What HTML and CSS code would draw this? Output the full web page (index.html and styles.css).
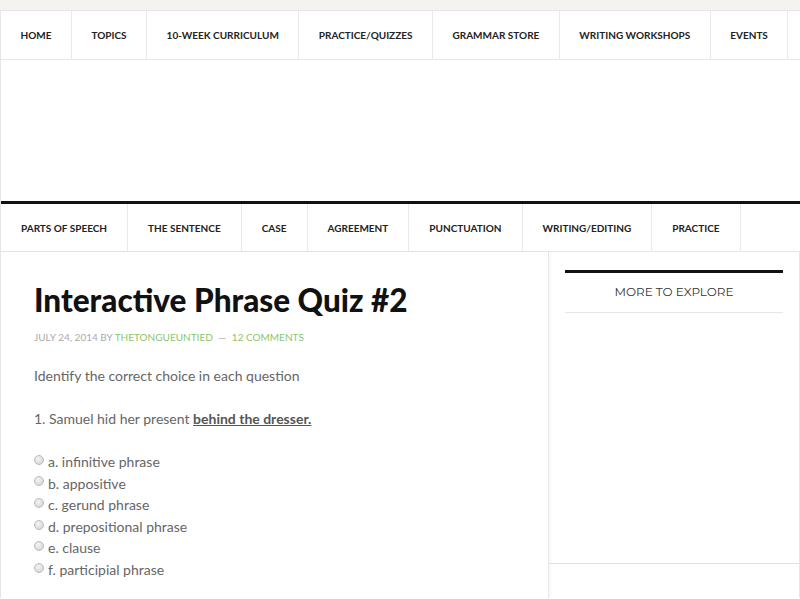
FILE: index.html
```html
<!DOCTYPE html>
<html>
<head>
<meta charset="utf-8">
<link rel="stylesheet" href="styles.css">
</head>
<body>
<div class="topstrip"></div>
<div class="site">
  <nav class="nav nav-primary">
    <ul>
      <li>Home</li>
      <li>Topics</li>
      <li>10-Week Curriculum</li>
      <li>Practice/Quizzes</li>
      <li>Grammar Store</li>
      <li>Writing Workshops</li>
      <li>Events</li>
    </ul>
  </nav>
  <header class="site-header"></header>
  <nav class="nav nav-secondary">
    <ul>
      <li>Parts of Speech</li>
      <li>The Sentence</li>
      <li>Case</li>
      <li>Agreement</li>
      <li>Punctuation</li>
      <li>Writing/Editing</li>
      <li>Practice</li>
    </ul>
  </nav>
  <div class="content-wrap">
    <main class="content">
      <h1 class="entry-title">Interactive Phrase Quiz #2</h1>
      <p class="entry-meta">July 24, 2014 by <a class="meta-link">TheTongueUntied</a> <span class="dash">—</span> <a class="meta-link">12 Comments</a></p>
      <p class="intro">Identify the correct choice in each question</p>
      <p class="question">1. Samuel hid her present <b class="target">behind the dresser.</b></p>
      <ul class="choices">
        <li><span class="radio"></span>a. infinitive phrase</li>
        <li><span class="radio"></span>b. appositive</li>
        <li><span class="radio"></span>c. gerund phrase</li>
        <li><span class="radio"></span>d. prepositional phrase</li>
        <li><span class="radio"></span>e. clause</li>
        <li><span class="radio"></span>f. participial phrase</li>
      </ul>
    </main>
    <aside class="sidebar">
      <section class="widget">
        <h4 class="widget-title">More to Explore</h4>
        <div class="widget-body"></div>
      </section>
      <section class="widget-next"></section>
    </aside>
  </div>
</div>
</body>
</html>
```
FILE: styles.css
```css
html, body {
  margin: 0;
  padding: 0;
  background: #fff;
}
body {
  font-family: "Lato", "Open Sans", sans-serif;
  color: #666;
  overflow: hidden;
  height: 599px;
}
.topstrip {
  height: 10px;
  background: #f4f3ef;
}
.site {
  border-left: 1px solid #e6e6e6;
}
.nav ul {
  list-style: none;
  margin: 0;
  padding: 0;
  display: flex;
}
.nav li {
  flex: 0 0 auto;
  white-space: nowrap;
  padding: 0 19.5px;
  border-right: 1px solid #eaeaea;
  font-size: 10px;
  font-weight: 700;
  text-transform: uppercase;
  color: #222;
  display: flex;
  align-items: center;
}
.nav-primary {
  border-top: 1px solid #e6e6e6;
  border-bottom: 1px solid #e6e6e6;
}
.nav-primary li {
  height: 48px;
}
.site-header {
  height: 141px;
}
.nav-secondary {
  border-top: 3px solid #111;
  border-bottom: 1px solid #e6e6e6;
}
.nav-secondary li {
  height: 47px;
  padding: 0 20px;
}
.content-wrap {
  display: flex;
  height: 346px;
}
.content {
  width: 514px;
  padding: 27px 0 0 33px;
  border-right: 1px solid #e6e6e6;
  box-shadow: 2px 0 3px rgba(0,0,0,0.03);
}
.entry-title {
  font-size: 31.5px;
  font-weight: 900;
  color: #111;
  margin: 0 0 10px;
  line-height: 42px;
}
.entry-meta {
  font-size: 10px;
  text-transform: uppercase;
  color: #aaa;
  margin: 0 0 22px;
}
.dash {
  margin: 0 3px;
}
.meta-link {
  color: #8cc56a;
}
.intro, .question {
  font-size: 14px;
  margin: 0 0 21px;
  line-height: 22px;
}
.target {
  color: #555;
  text-decoration: underline;
  font-weight: 700;
}
.choices {
  list-style: none;
  margin: 0;
  padding: 0;
  font-size: 14px;
}
.choices li {
  line-height: 21.6px;
  display: flex;
  align-items: center;
}
.radio {
  width: 10px;
  height: 10px;
  border-radius: 50%;
  background: radial-gradient(circle at 40% 35%, #f4f4f4, #cfcfcf);
  border: 1px solid #bbb;
  box-sizing: border-box;
  margin-right: 4px;
  margin-top: -4px;
}
.sidebar {
  width: 250px;
  border-right: 1px solid #e6e6e6;
}
.widget {
  padding: 18px 16px 0 16px;
  height: 293px;
  border-bottom: 1px solid #e0e0e0;
}
.widget-title {
  margin: 0;
  border-top: 3px solid #111;
  border-bottom: 1px solid #e6e6e6;
  text-align: center;
  font-family: "Montserrat", "Open Sans", sans-serif;
  font-weight: 400;
  font-size: 12px;
  color: #333;
  text-transform: uppercase;
  padding: 11px 0 13px;
}
```
